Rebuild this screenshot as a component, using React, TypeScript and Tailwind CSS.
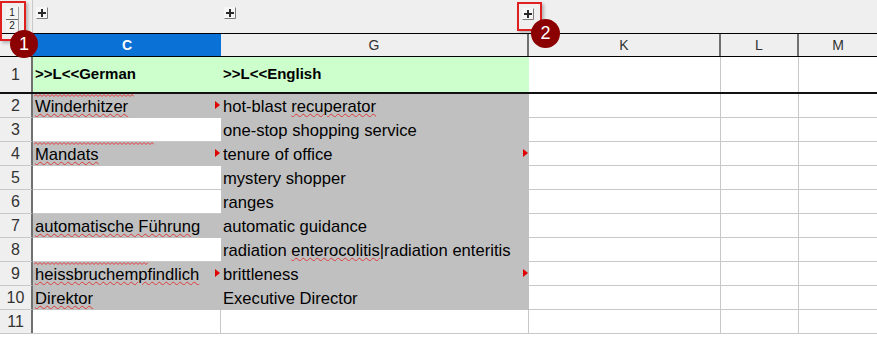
const rows = [
  { n: 2, c: 'Winderhitzer', cGray: true, cMark: true, cTop: true, g: 'hot-blast ', gWave: 'recuperator' },
  { n: 3, c: '', cGray: false, g: 'one-stop shopping service' },
  { n: 4, c: 'Mandats', cGray: true, cMark: true, cTop: true, g: 'tenure of office', gMark: true },
  { n: 5, c: '', cGray: false, g: 'mystery shopper' },
  { n: 6, c: '', cGray: false, g: 'ranges' },
  { n: 7, c: 'automatische Führung', cGray: true, g: 'automatic guidance' },
  { n: 8, c: '', cGray: false, g: 'radiation ', gWave: 'enterocolitis', gTail: '|radiation enteritis' },
  { n: 9, c: 'heissbruchempfindlich', cGray: true, cMark: true, cTop: true, g: 'brittleness', gMark: true },
  { n: 10, c: 'Direktor', cGray: true, g: 'Executive Director' },
];

function Mark() {
  return (
    <span className="absolute right-[1px] top-[7px] h-0 w-0 border-y-[4px] border-l-[5px] border-y-transparent border-l-[#e00000]" />
  );
}

function Wave({ w }: { w: number }) {
  const pts: string[] = [];
  for (let x = 0; x <= w; x += 2) pts.push(`${x},${(x / 2) % 2 === 0 ? 2.5 : 0.5}`);
  return (
    <svg width={w} height={3} className="block">
      <polyline points={pts.join(' ')} fill="none" stroke="#e23b3b" strokeWidth={1} />
    </svg>
  );
}

function PlusBtn() {
  return (
    <svg width={12} height={12} viewBox="0 0 12 12" className="block">
      <rect x={0.5} y={0.5} width={11} height={11} fill="#f6f6f6" stroke="#f6f6f6" />
      <path d="M11.5 0.5 V11.5 H0.5" fill="none" stroke="#7a7a7a" />
      <path d="M2 6 H10 M6 2 V10" stroke="#2a2a2a" strokeWidth={2} />
    </svg>
  );
}

const wavy = 'underline decoration-[#e23b3b] decoration-wavy decoration-1 underline-offset-[1px]';

export default function App() {
  const font = { fontFamily: '"Liberation Sans", Arial, sans-serif' };
  return (
    <div className="relative h-[340px] w-[877px] overflow-hidden bg-white text-black" style={font}>
      {/* outline bar */}
      <div className="flex h-[33px] bg-[#efefef]">
        <div className="flex w-[33px] shrink-0 border-r border-[#c8c8c8] pl-[6px] pt-[7px]">
          <div className="flex h-[25px] w-[13px] flex-col border-r border-[#a0a0a0] bg-[#f4f4f4] text-[10px] leading-[12px] text-[#222]">
            <span className="border-b border-[#666] text-center">1</span>
            <span className="text-center">2</span>
          </div>
        </div>
        <div className="flex w-[188px] shrink-0 pl-[3px] pt-[7px]">
          <PlusBtn />
        </div>
        <div className="flex w-[308px] shrink-0 pl-[3px] pt-[7px]">
          <PlusBtn />
        </div>
        <div className="flex-1" />
      </div>

      {/* column header */}
      <div className="flex h-[24px] border-y border-black bg-[#efefef] text-[14px] leading-[22px] text-[#333]">
        <div className="w-[33px] shrink-0 border-r-2 border-[#707070]" />
        <div className="w-[188px] shrink-0 bg-[#0a72d6] text-center font-bold text-white">C</div>
        <div className="w-[308px] shrink-0 border-r-2 border-[#707070] text-center">G</div>
        <div className="w-[192px] shrink-0 border-r-2 border-[#707070] text-center">K</div>
        <div className="w-[78px] shrink-0 border-r-2 border-[#707070] text-center">L</div>
        <div className="flex-1 text-center">M</div>
      </div>

      {/* row 1 */}
      <div className="flex h-[37px] border-b-2 border-[#111]">
        <div className="flex w-[33px] shrink-0 items-center justify-center border-r-2 border-[#707070] bg-[#efefef] text-[16px] text-[#333]">
          1
        </div>
        <div className="flex w-[188px] shrink-0 items-center bg-[#ccffcc] pl-[2px] text-[15px] font-bold">
          &gt;&gt;L&lt;&lt;German
        </div>
        <div className="flex w-[308px] shrink-0 items-center bg-[#ccffcc] pl-[2px] text-[15px] font-bold">
          &gt;&gt;L&lt;&lt;English
        </div>
        <div className="w-[192px] shrink-0 border-r border-[#c8c8c8]" />
        <div className="w-[78px] shrink-0 border-r border-[#c8c8c8]" />
        <div className="flex-1" />
      </div>

      {/* data rows */}
      {rows.map((r) => (
        <div key={r.n} className="flex h-[24px]">
          <div className="flex w-[33px] shrink-0 items-center justify-center border-b border-r-2 border-b-[#c8c8c8] border-r-[#707070] bg-[#efefef] text-[16px] text-[#333]">
            {r.n}
          </div>
          <div
            className={`relative flex w-[188px] shrink-0 items-end overflow-hidden border-b pb-[1px] pl-[2px] text-[16.6px] leading-[19px] ${
              r.cGray ? 'border-[#c0c0c0] bg-[#c0c0c0]' : 'border-[#c8c8c8] bg-white'
            }`}
          >
            {r.cTop && (
              <div className="absolute left-[1px] top-0">
                <Wave w={r.n === 4 ? 120 : r.n === 9 ? 115 : 100} />
              </div>
            )}
            {r.c && <span className={wavy}>{r.c}</span>}
            {r.cMark && <Mark />}
          </div>
          <div className="relative flex w-[308px] shrink-0 items-end overflow-hidden border-b border-[#c0c0c0] bg-[#c0c0c0] pb-[1px] pl-[2px] text-[16.6px] leading-[19px]">
            <span className="whitespace-pre">
              {r.g}
              {r.gWave && <span className={wavy}>{r.gWave}</span>}
              {r.gTail}
            </span>
            {r.gMark && <Mark />}
          </div>
          <div className="w-[192px] shrink-0 border-b border-r border-[#c8c8c8]" />
          <div className="w-[78px] shrink-0 border-b border-r border-[#c8c8c8]" />
          <div className="flex-1 border-b border-[#c8c8c8]" />
        </div>
      ))}

      {/* row 11 */}
      <div className="flex h-[24px] border-b border-[#c8c8c8]">
        <div className="flex w-[33px] shrink-0 items-center justify-center border-r-2 border-[#707070] bg-[#efefef] text-[16px] text-[#333]">
          11
        </div>
        <div className="w-[188px] shrink-0 border-r border-[#c8c8c8]" />
        <div className="w-[308px] shrink-0 border-r border-[#c8c8c8]" />
        <div className="w-[192px] shrink-0 border-r border-[#c8c8c8]" />
        <div className="w-[78px] shrink-0 border-r border-[#c8c8c8]" />
        <div className="flex-1" />
      </div>

      {/* annotations */}
      <div className="absolute left-0 top-[1px] h-[40px] w-[26px] border-2 border-[#e02020] shadow-[2px_2px_3px_rgba(0,0,0,0.25)]" />
      <div className="absolute left-[517px] top-[2px] h-[29px] w-[25px] border-2 border-[#e02020] shadow-[2px_2px_3px_rgba(0,0,0,0.25)]" />
      <div className="absolute left-[522px] top-[8px]">
        <PlusBtn />
      </div>
      <div className="absolute left-[10px] top-[30px] flex h-[28px] w-[28px] items-center justify-center rounded-full bg-[#8b0000] text-[18px] text-white">
        1
      </div>
      <div className="absolute left-[531px] top-[19px] flex h-[29px] w-[29px] items-center justify-center rounded-full bg-[#8b0000] text-[18px] text-white">
        2
      </div>
    </div>
  );
}
